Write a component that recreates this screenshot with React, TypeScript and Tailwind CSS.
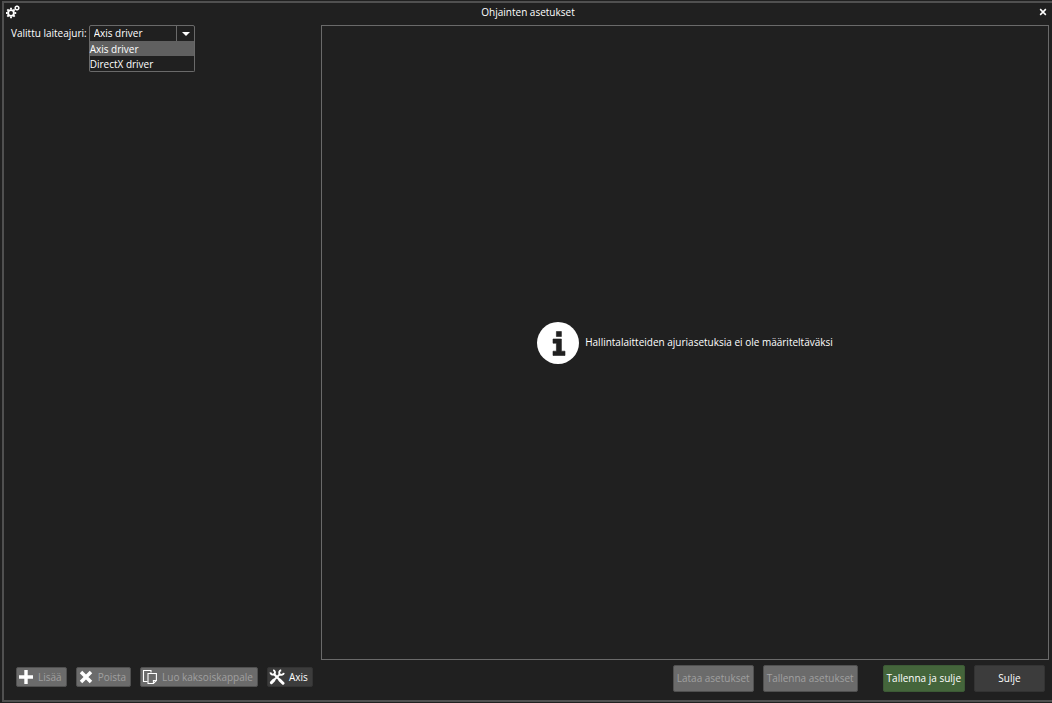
import React, { useState } from 'react';

const drivers = ['Axis driver', 'DirectX driver'];

const teeth = [0, 45, 90, 135, 180, 225, 270, 315];

const GearsIcon = () => (
  <svg viewBox="0 0 14 14" className="w-3.5 h-3.5 shrink-0" fill="none" stroke="currentColor">
    <circle cx="5" cy="8" r="2.9" strokeWidth="1.9" />
    {teeth.map((a) => <path key={a} d="M5 4.4V2.8" strokeWidth="1.9" transform={`rotate(${a} 5 8)`} />)}
    <circle cx="11" cy="3" r="1.7" strokeWidth="1.2" />
    {teeth.map((a) => <path key={a} d="M11 1V.2" strokeWidth="1.1" transform={`rotate(${a} 11 3)`} />)}
  </svg>
);

const PlusIcon = () => (
  <svg viewBox="0 0 16 16" className="w-4 h-4 shrink-0" fill="none" stroke="currentColor" strokeWidth="3.4">
    <path d="M8 1v14M1 8h14" />
  </svg>
);

const CrossIcon = ({ className, weight = 4 }: { className: string; weight?: number }) => (
  <svg viewBox="0 0 16 16" className={className} fill="none" stroke="currentColor" strokeWidth={weight}>
    <path d="M2.3 2.3l11.4 11.4M13.7 2.3L2.3 13.7" />
  </svg>
);

const CopyIcon = () => (
  <svg viewBox="0 0 16 16" className="w-4 h-4 shrink-0" fill="none" stroke="currentColor" strokeWidth="1.1">
    <path d="M5.5 12.5h-4v-11h7.5v2" />
    <path d="M6 4.5h8.4v7l-3 3H6z" />
    <path d="M14.4 11.5h-3v3" />
  </svg>
);

const ToolsIcon = () => (
  <svg viewBox="0 0 16 16" className="w-4 h-4 shrink-0" fill="none" stroke="currentColor">
    <path d="M4.5 4.5l7.5 7.7" strokeWidth="2.2" />
    <path d="M11 11.2l3 3" strokeWidth="3" strokeLinecap="round" />
    <path d="M1.4 3.4a2.4 2.4 0 0 0 4.2 1.4A2.4 2.4 0 0 0 4.2 1.2" strokeWidth="1.9" />
    <path d="M10.8 5.2L5.6 10.4" strokeWidth="2" />
    <path d="M4.9 11.1L2.4 13.6" strokeWidth="3" strokeLinecap="round" />
    <path d="M12.2 1.2a2.4 2.4 0 0 0-1.4 4 2.4 2.4 0 0 0 4-1.4" strokeWidth="1.9" />
  </svg>
);

const InfoIcon = () => (
  <svg viewBox="0 0 42 42" className="w-[42px] h-[42px] shrink-0">
    <circle cx="21" cy="21" r="21" fill="#fff" />
    <path d="M19.4 9.5h5v5h-5zM16 17h8.4v12.2H28v4.3H16v-4.3h3.4v-8H16z" fill="#202020" stroke="#202020" strokeWidth=".6" strokeLinejoin="round" />
  </svg>
);

const ToolButton = ({ icon, label, disabled }: { icon: React.ReactNode; label: string; disabled?: boolean }) => (
  <button
    type="button"
    disabled={disabled}
    className="h-5 pl-px pr-1 flex items-center gap-1 rounded-xs border border-[#333333] bg-[#3c3c3c] text-white disabled:bg-[#6b6b6b] disabled:border-[#505050] whitespace-nowrap group"
  >
    {icon}
    <span className="group-disabled:text-[#a0a0a0]">{label}</span>
  </button>
);

export default function App() {
  const [driver, setDriver] = useState(drivers[0]);

  return (
    <div className="min-h-screen flex bg-[#202020] pt-px pl-0.5 pb-px font-['Open_Sans',sans-serif] text-[10px] leading-[15px] text-white">
      <div className="flex-1 flex flex-col border-y-2 border-l-2 border-[#505050]">
        <header className="h-[22px] shrink-0 flex items-center justify-between px-0.5 pb-1">
          <GearsIcon />
          <h1>Ohjainten asetukset</h1>
          <button type="button" aria-label="Sulje ikkuna" className="w-3.5 h-3.5 flex items-center justify-center">
            <CrossIcon className="w-2 h-2" weight={3} />
          </button>
        </header>

        <div className="flex-1 flex">
          <aside className="w-[317px] shrink-0 flex flex-col justify-between pl-[7px]">
            <div className="flex items-center gap-0.5">
              <label htmlFor="driver">Valittu laiteajuri:</label>
              <div className="relative w-[106px]">
                <select
                  id="driver"
                  value={driver}
                  onChange={(e) => setDriver(e.target.value)}
                  className="block w-full h-[17px] pl-1 appearance-none rounded-t-xs border border-[#6a6a6a] bg-[#202020]"
                >
                  {drivers.map((d) => <option key={d}>{d}</option>)}
                </select>
                <div className="absolute inset-y-0 right-0 w-[19px] border-l border-[#6a6a6a] flex items-center justify-center pointer-events-none">
                  <svg viewBox="0 0 8 4" className="w-2 h-1" fill="currentColor"><path d="M0 0h8L4 4z" /></svg>
                </div>
                <ul role="listbox" aria-label="Laiteajurit" className="absolute top-4 inset-x-0 rounded-b-xs border border-t-0 border-[#6a6a6a] bg-[#202020]">
                  {drivers.map((d) => (
                    <li
                      key={d}
                      role="option"
                      aria-selected={d === driver}
                      onClick={() => setDriver(d)}
                      className="h-[15px] leading-[17px] aria-selected:bg-[#606060]"
                    >
                      {d}
                    </li>
                  ))}
                </ul>
              </div>
            </div>

            <div className="flex gap-[9px] pl-[5px] pb-[13px]">
              <ToolButton icon={<PlusIcon />} label="Lisää" disabled />
              <ToolButton icon={<CrossIcon className="w-4 h-4 p-px shrink-0" />} label="Poista" disabled />
              <ToolButton icon={<CopyIcon />} label="Luo kaksoiskappale" disabled />
              <ToolButton icon={<ToolsIcon />} label="Axis" />
            </div>
          </aside>

          <div className="flex-1 flex flex-col pr-[3px]">
            <main className="flex-1 flex items-center justify-center gap-1.5 border border-[#6a6a6a]">
              <InfoIcon />
              <p>Hallintalaitteiden ajuriasetuksia ei ole määriteltäväksi</p>
            </main>

            <footer className="flex justify-end gap-[9px] pt-[5px] pb-2 pr-1">
              <button type="button" disabled className="h-[27px] px-[3px] rounded-xs border border-[#505050] bg-[#6b6b6b] text-[#a0a0a0]">Lataa asetukset</button>
              <button type="button" disabled className="h-[27px] px-[3px] mr-4 rounded-xs border border-[#505050] bg-[#6b6b6b] text-[#a0a0a0]">Tallenna asetukset</button>
              <button type="button" className="h-[27px] px-[3px] rounded-xs border border-[#3c5a35] bg-[#44653b]">Tallenna ja sulje</button>
              <button type="button" className="h-[27px] w-[71px] rounded-xs border border-[#333333] bg-[#3c3c3c]">Sulje</button>
            </footer>
          </div>
        </div>
      </div>
    </div>
  );
}
